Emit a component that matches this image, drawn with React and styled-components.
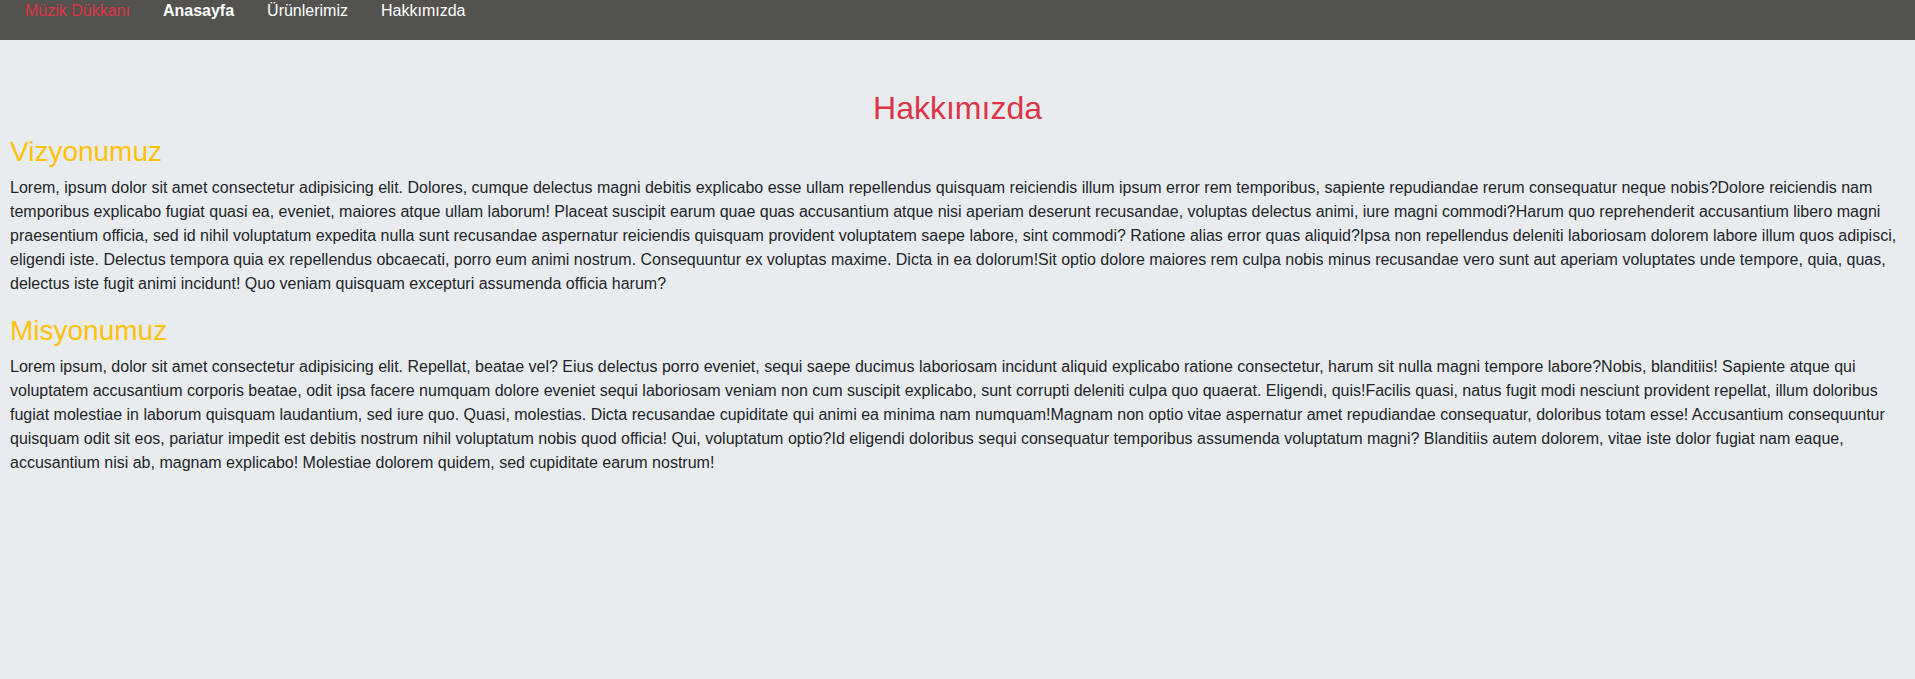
import React from "react";
import styled, { createGlobalStyle } from "styled-components";

const GlobalStyle = createGlobalStyle`
  * { box-sizing: border-box; }
  html, body { margin: 0; padding: 0; }
  body {
    background: #e9ecef;
    font-family: "Liberation Sans", Arial, sans-serif;
    font-size: 16px;
    line-height: 1.5;
    color: #212529;
    min-height: 100vh;
  }
`;

const Navbar = styled.nav`
  height: 40px;
  background: #54524f;
  display: flex;
  align-items: flex-start;
  gap: 33px;
  padding: 1px 0 0 25px;
`;

const Brand = styled.a`
  color: #dc3545;
  font-size: 16px;
  line-height: 20px;
  text-decoration: none;
`;

const NavLink = styled.a`
  color: #ffffff;
  font-size: 16px;
  line-height: 20px;
  font-weight: ${(p) => (p.$active ? 700 : 400)};
  text-decoration: none;
`;

const Main = styled.main`
  padding: 49px 10px 0 10px;
`;

const Title = styled.h2`
  margin: 0 0 8px;
  font-size: 32px;
  font-weight: 500;
  line-height: 1.2;
  color: #dc3545;
  text-align: center;
`;

const SectionTitle = styled.h3`
  margin: 0 0 7px;
  font-size: 28px;
  font-weight: 500;
  line-height: 1.2;
  color: #ffc107;
`;

const Paragraph = styled.p`
  margin: 0 0 18px;
  font-size: 16px;
  line-height: 24px;
`;

const sections = [
  {
    title: "Vizyonumuz",
    text: "Lorem, ipsum dolor sit amet consectetur adipisicing elit. Dolores, cumque delectus magni debitis explicabo esse ullam repellendus quisquam reiciendis illum ipsum error rem temporibus, sapiente repudiandae rerum consequatur neque nobis?Dolore reiciendis nam temporibus explicabo fugiat quasi ea, eveniet, maiores atque ullam laborum! Placeat suscipit earum quae quas accusantium atque nisi aperiam deserunt recusandae, voluptas delectus animi, iure magni commodi?Harum quo reprehenderit accusantium libero magni praesentium officia, sed id nihil voluptatum expedita nulla sunt recusandae aspernatur reiciendis quisquam provident voluptatem saepe labore, sint commodi? Ratione alias error quas aliquid?Ipsa non repellendus deleniti laboriosam dolorem labore illum quos adipisci, eligendi iste. Delectus tempora quia ex repellendus obcaecati, porro eum animi nostrum. Consequuntur ex voluptas maxime. Dicta in ea dolorum!Sit optio dolore maiores rem culpa nobis minus recusandae vero sunt aut aperiam voluptates unde tempore, quia, quas, delectus iste fugit animi incidunt! Quo veniam quisquam excepturi assumenda officia harum?",
  },
  {
    title: "Misyonumuz",
    text: "Lorem ipsum, dolor sit amet consectetur adipisicing elit. Repellat, beatae vel? Eius delectus porro eveniet, sequi saepe ducimus laboriosam incidunt aliquid explicabo ratione consectetur, harum sit nulla magni tempore labore?Nobis, blanditiis! Sapiente atque qui voluptatem accusantium corporis beatae, odit ipsa facere numquam dolore eveniet sequi laboriosam veniam non cum suscipit explicabo, sunt corrupti deleniti culpa quo quaerat. Eligendi, quis!Facilis quasi, natus fugit modi nesciunt provident repellat, illum doloribus fugiat molestiae in laborum quisquam laudantium, sed iure quo. Quasi, molestias. Dicta recusandae cupiditate qui animi ea minima nam numquam!Magnam non optio vitae aspernatur amet repudiandae consequatur, doloribus totam esse! Accusantium consequuntur quisquam odit sit eos, pariatur impedit est debitis nostrum nihil voluptatum nobis quod officia! Qui, voluptatum optio?Id eligendi doloribus sequi consequatur temporibus assumenda voluptatum magni? Blanditiis autem dolorem, vitae iste dolor fugiat nam eaque, accusantium nisi ab, magnam explicabo! Molestiae dolorem quidem, sed cupiditate earum nostrum!",
  },
];

export default function App() {
  return (
    <>
      <GlobalStyle />
      <Navbar>
        <Brand href="#">Müzik Dükkanı</Brand>
        <NavLink href="#" $active>Anasayfa</NavLink>
        <NavLink href="#">Ürünlerimiz</NavLink>
        <NavLink href="#">Hakkımızda</NavLink>
      </Navbar>
      <Main>
        <Title>Hakkımızda</Title>
        {sections.map((s) => (
          <section key={s.title}>
            <SectionTitle>{s.title}</SectionTitle>
            <Paragraph>{s.text}</Paragraph>
          </section>
        ))}
      </Main>
    </>
  );
}
